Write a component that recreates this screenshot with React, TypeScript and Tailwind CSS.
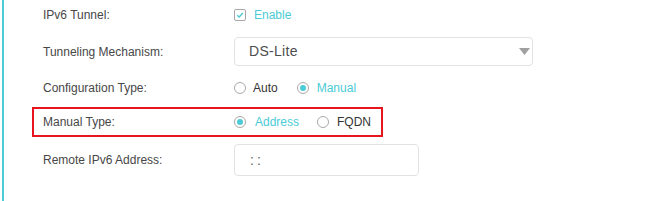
const teal = 'text-[#4acbd6]';

function Radio({ checked }: { checked?: boolean }) {
  return (
    <span className="w-[12px] h-[12px] rounded-full border border-[#a8a8a8] bg-white flex items-center justify-center shrink-0">
      {checked && <span className="w-[6px] h-[6px] rounded-full bg-[#4acbd6]"></span>}
    </span>
  );
}

function Checkbox() {
  return (
    <span className="w-[12px] h-[12px] rounded-[2px] border border-[#a8a8a8] bg-white flex items-center justify-center shrink-0">
      <svg width="8" height="8" viewBox="0 0 8 8">
        <path d="M1.2 4.2 L3.2 6 L6.8 2" fill="none" stroke="#4acbd6" strokeWidth="1.4" />
      </svg>
    </span>
  );
}

function Label({ children }: { children: React.ReactNode }) {
  return <div className="w-[191px] shrink-0 text-[12px] text-[#474747]">{children}</div>;
}

export default function App() {
  return (
    <div className="w-[660px] h-[201px] bg-white overflow-hidden" style={{ fontFamily: '"Liberation Sans", Arial, sans-serif' }}>
      <div className="ml-[2px] h-full border-l-2 border-[#4acbd6] pl-[28px]">
        {/* IPv6 Tunnel */}
        <div className="h-[30px] flex items-center pl-[11px]">
          <Label>IPv6 Tunnel:</Label>
          <label className="flex items-center gap-[8px]">
            <Checkbox />
            <span className={`text-[12px] ${teal}`}>Enable</span>
          </label>
        </div>

        {/* Tunneling Mechanism */}
        <div className="h-[43px] flex items-center pl-[11px]">
          <Label>Tunneling Mechanism:</Label>
          <div className="w-[299px] h-[29px] rounded-[4px] border border-[#e2e2e2] flex items-center justify-between pl-[14px] pr-[2px]">
            <span className="text-[14px] text-[#4d4d4d] tracking-[0.3px]">DS-Lite</span>
            <svg width="11" height="7" viewBox="0 0 11 7">
              <path d="M0 0 H11 L5.5 7 Z" fill="#a0a0a0" />
            </svg>
          </div>
        </div>

        {/* Configuration Type */}
        <div className="h-[30px] flex items-center pl-[11px]">
          <Label>Configuration Type:</Label>
          <div className="flex items-center">
            <label className="flex items-center gap-[7px]">
              <Radio />
              <span className="text-[12px] text-[#333]">Auto</span>
            </label>
            <label className="flex items-center gap-[8px] ml-[19px]">
              <Radio checked />
              <span className={`text-[12px] ${teal}`}>Manual</span>
            </label>
          </div>
        </div>

        {/* Manual Type (highlighted) */}
        <div className="mt-[4px] w-[351px] h-[30px] border-2 border-[#e8141e] flex items-center pl-[9px]">
          <Label>Manual Type:</Label>
          <div className="flex items-center">
            <label className="flex items-center gap-[9px]">
              <Radio checked />
              <span className={`text-[12px] ${teal}`}>Address</span>
            </label>
            <label className="flex items-center gap-[8px] ml-[18px]">
              <Radio />
              <span className="text-[12px] text-[#333]">FQDN</span>
            </label>
          </div>
        </div>

        {/* Remote IPv6 Address */}
        <div className="mt-[7px] h-[32px] flex items-center pl-[11px]">
          <Label>Remote IPv6 Address:</Label>
          <div className="w-[185px] h-[32px] rounded-[4px] border border-[#e2e2e2] flex items-center pl-[15px]">
            <span className="text-[14px] text-[#666] tracking-[3px]">::</span>
          </div>
        </div>
      </div>
    </div>
  );
}
